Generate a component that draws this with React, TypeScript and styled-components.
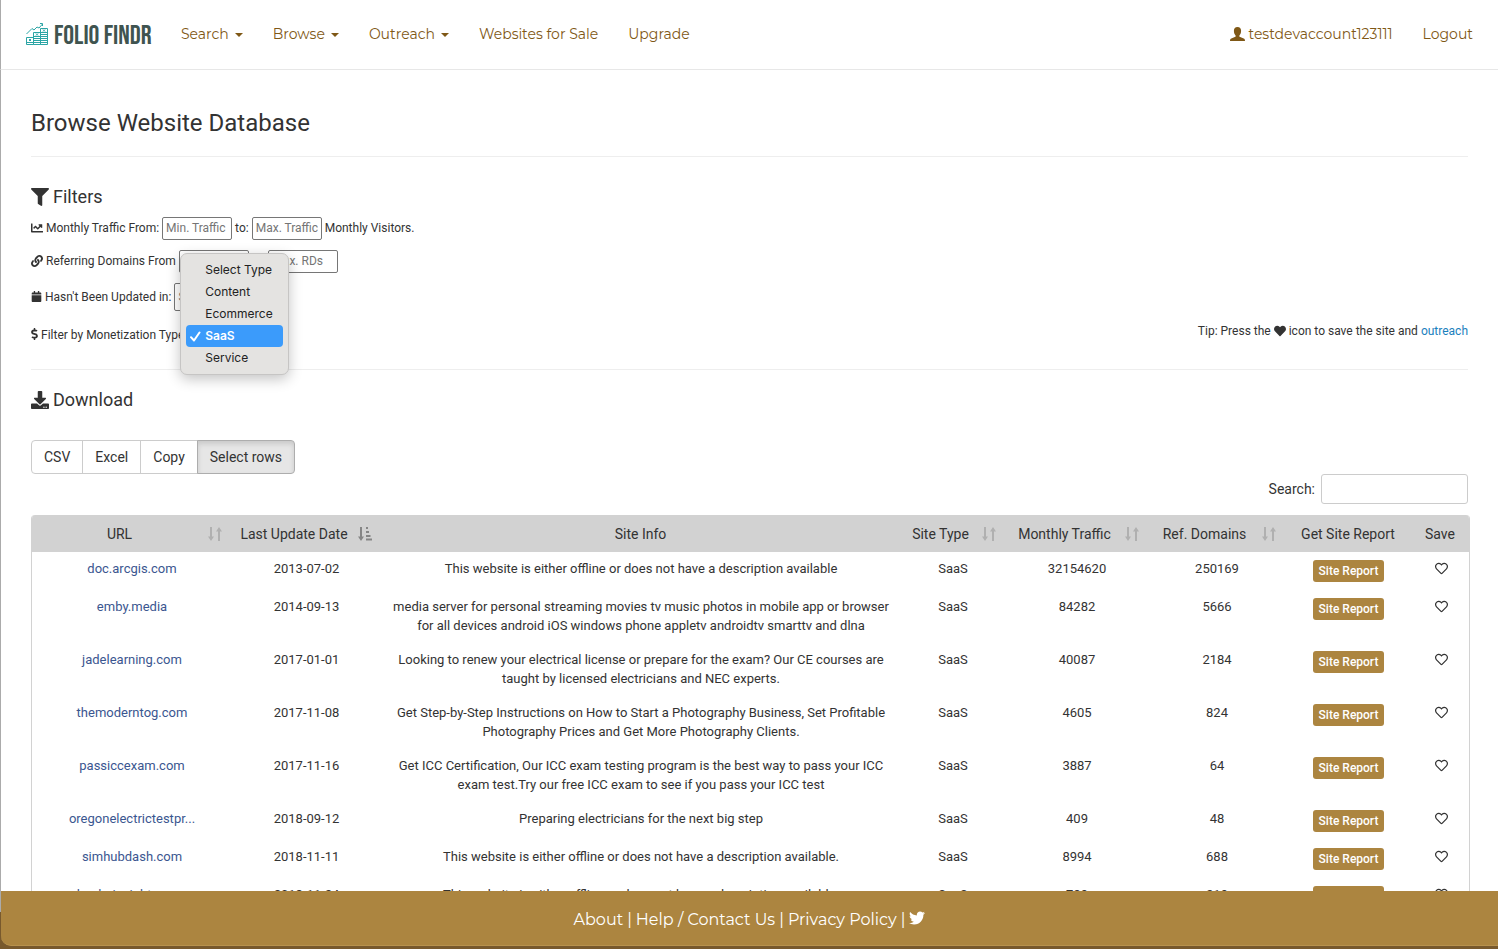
import React from "react";
import styled, { createGlobalStyle, css } from "styled-components";
import {
  FaCalendar,
  FaChartLine,
  FaDollarSign,
  FaDownload,
  FaFilter,
  FaHeart,
  FaLink,
  FaRegHeart,
  FaTwitter,
} from "react-icons/fa";

const GlobalStyle = createGlobalStyle`
  *, *::before, *::after { box-sizing: border-box; }
  body {
    margin: 0;
    background: #fff;
    color: #333;
    font: 14px/20px Roboto, sans-serif;
  }
  button, input, select { font-family: inherit; color: inherit; }
  a { text-decoration: none; }
`;

const brandFont = css`
  font-family: Montserrat, Inter, sans-serif;
  font-weight: 400;
`;

const Shell = styled.div`
  display: flex;
  flex-direction: column;
  height: 100vh;
  overflow: hidden;
`;

const Header = styled.header`
  ${brandFont}
  display: flex;
  align-items: center;
  flex: none;
  height: 70px;
  padding: 0 25px 2px;
  border-left: 1px solid #ababab;
  border-bottom: 1px solid #e7e7e7;
  font-size: 14px;
`;

const Brand = styled.a`
  display: flex;
  align-items: center;
  gap: 6px;
  width: 125px;
  margin-right: 30px;
  color: #3f5450;
  font: 27px/30px "Bebas Neue", "Roboto Condensed", "Liberation Sans Narrow", sans-serif;
  white-space: nowrap;
`;

const BrandName = styled.span`
  padding-top: 4px;
`;

const Nav = styled.nav`
  display: flex;
  align-items: center;
  gap: 30px;
`;

const Account = styled(Nav)`
  margin-left: auto;
`;

const navItem = css`
  display: flex;
  align-items: center;
  gap: 6px;
  padding: 0;
  border: 0;
  background: none;
  color: #7f5816;
  font: inherit;
  white-space: nowrap;
`;

const NavLink = styled.a`
  ${navItem}
  gap: 3px;
`;

const NavMenu = styled.button`
  ${navItem}
  &::after {
    content: "";
    margin-top: 2px;
    border: 4px solid transparent;
    border-top-color: currentColor;
    border-bottom: 0;
  }
`;

const NavIcon = styled.svg`
  flex: none;
`;

const Main = styled.main`
  flex: 1;
  min-height: 0;
  overflow: hidden;
  padding: 36px 28px 0 30px;
  border-left: 1px solid #ababab;
`;

const PageTitle = styled.h1`
  margin: 0 2px 0 0;
  padding-bottom: 15px;
  border-bottom: 1px solid #eee;
  font-size: 24px;
  font-weight: 400;
  line-height: 35px;
`;

const SectionTitle = styled.h2`
  display: flex;
  align-items: center;
  gap: 4px;
  margin: 0;
  font-size: 18px;
  font-weight: 400;
  line-height: 20px;
`;

const Filters = styled.section`
  display: flex;
  flex-direction: column;
  gap: 10px;
  margin-right: 2px;
  padding: 30px 0 20px;
  border-bottom: 1px solid #eee;
  font-size: 12px;
`;

const FilterRow = styled.div<{ $tall?: boolean }>`
  display: flex;
  align-items: center;
  gap: 3px;
  height: ${(p) => (p.$tall ? 28 : 23)}px;
  line-height: ${(p) => (p.$tall ? 20 : 21)}px;
  white-space: nowrap;
`;

const FilterLabel = styled.label`
  display: flex;
  align-items: center;
  gap: 3px;
  & > svg { margin-bottom: 2px; }
`;

const RangeInput = styled.input`
  width: 70px;
  height: 23px;
  padding: 0 3px 1px;
  border: 1px solid #767676;
  border-radius: 2px;
  background: #fff;
  font-size: 12px;
  &::placeholder { color: #757575; }
`;

const FilterSelect = styled.select`
  width: 90px;
  height: 28px;
  padding: 0 3px;
  border: 1px solid #767676;
  border-radius: 2px;
  appearance: none;
  background: #fff;
  color: #757575;
  font-size: 12px;
`;

const TypePicker = styled.div`
  position: relative;
`;

const Options = styled.ul`
  position: absolute;
  left: -10px;
  bottom: -26px;
  width: 109px;
  margin: 0;
  padding: 5px;
  border: 1px solid #c6c5c4;
  border-radius: 7px;
  background: #e4e3e1;
  box-shadow: 0 4px 14px rgba(0, 0, 0, 0.24);
  color: #222;
  font-family: Inter, Roboto, sans-serif;
  list-style: none;
`;

const Option = styled.li<{ $selected: boolean }>`
  display: flex;
  align-items: center;
  gap: 4px;
  height: 22px;
  padding-left: ${(p) => (p.$selected ? 4 : 19)}px;
  border-radius: 4px;
  background: ${(p) => (p.$selected ? "#3b9bfb" : "transparent")};
  color: ${(p) => (p.$selected ? "#fff" : "inherit")};
  font-weight: ${(p) => (p.$selected ? 600 : 400)};
`;

const Tip = styled.p`
  display: flex;
  align-items: center;
  gap: 3px;
  align-self: flex-start;
  margin: 0 0 0 auto;
`;

const TipLink = styled.a`
  color: #1b80bd;
`;

const Download = styled.section`
  padding-top: 20px;
`;

const ButtonGroup = styled.div`
  display: flex;
  margin-top: 30px;
`;

const ExportButton = styled.button<{ $active?: boolean }>`
  height: 34px;
  margin-left: -1px;
  padding: 0 12px;
  border: 1px solid ${(p) => (p.$active ? "#adadad" : "#ccc")};
  background: ${(p) => (p.$active ? "#e6e6e6" : "#fff")};
  box-shadow: ${(p) => (p.$active ? "inset 0 3px 5px rgba(0, 0, 0, 0.125)" : "none")};
  font-size: 14px;
  white-space: nowrap;
  &:first-child { margin-left: 0; border-radius: 4px 0 0 4px; }
  &:last-child { border-radius: 0 4px 4px 0; }
`;

const SearchBar = styled.label`
  display: flex;
  align-items: center;
  justify-content: flex-end;
  gap: 6px;
  margin: 0 2px 11px 0;
`;

const SearchInput = styled.input`
  width: 147px;
  height: 30px;
  border: 1px solid #ccc;
  border-radius: 3px;
  background: #fff;
`;

const Frame = styled.div`
  overflow: hidden;
  border: 1px solid #d2d2d2;
  border-top: 0;
  border-radius: 4px;
`;

const Table = styled.table`
  width: 100%;
  table-layout: fixed;
  border-collapse: collapse;
  text-align: center;
  font-size: 13px;
  line-height: 19px;
`;

const HeadCell = styled.th<{ $width?: number; $sortable?: boolean }>`
  width: ${(p) => (p.$width ? `${p.$width}px` : "auto")};
  height: 37px;
  padding: 1px ${(p) => (p.$sortable ? "9px 0 7px" : "0 0")};
  background: #d2d2d2;
  font-size: 14px;
  font-weight: 400;
  white-space: nowrap;
`;

const HeadContent = styled.div`
  display: flex;
  align-items: center;
`;

const HeadLabel = styled.span`
  flex: 1;
`;

const SortIcon = styled.svg<{ $active: boolean }>`
  flex: none;
  margin-left: 8px;
  color: ${(p) => (p.$active ? "#858585" : "#b0b0b0")};
`;

const Cell = styled.td`
  height: 38px;
  padding: 7px 7px 8px 8px;
  vertical-align: top;
`;

const SiteLink = styled.a`
  color: #3b5690;
`;

const ReportButton = styled.button`
  display: block;
  height: 22px;
  margin: 1px auto 0;
  padding: 0 6px;
  border: 0;
  border-radius: 3px;
  background: #ac8540;
  color: #fff;
  font-size: 12px;
  font-weight: 500;
  line-height: 22px;
  white-space: nowrap;
`;

const SaveButton = styled.button`
  display: inline-flex;
  padding: 3px 0 0 2px;
  border: 0;
  background: none;
`;

const FooterBackdrop = styled.div`
  flex: none;
  padding: 0 0 3px 1px;
  background: linear-gradient(#ababab 21px, #78592d 21px);
`;

const Footer = styled.footer`
  ${brandFont}
  display: flex;
  align-items: center;
  justify-content: center;
  gap: 4px;
  height: 55px;
  padding-top: 3px;
  border-bottom: 1px solid #b8924e;
  border-radius: 0 0 0 10px;
  background: #ac8540;
  color: #fff;
  font-size: 16px;
  white-space: nowrap;
`;

const FooterLink = styled.a`
  display: inline-flex;
  color: inherit;
`;

const TwitterLink = styled(FooterLink)`
  padding-bottom: 4px;
`;

const LogoMark = () => (
  <NavIcon width="22" height="22" viewBox="0 0 22 22" fill="none" stroke="#2ba5a5" aria-hidden="true">
    <path d="M.5 11 6 5.500l2 1.500 3-3 2 1 3.500-4M14 .5h2.500V3" />
    <path d="M.5 14.500h7v7h-7zM7.500 9.500h7v12h-7zM14.500 5.500h7v16h-7z" />
    <path d="M.5 19.500h21M7.500 17.500h14M7.500 15.500h14M7.500 13.500h14M14.500 9.500h7M14.500 11.500h7" />
    <path d="M3 16l2 2M5 16l-2 2M10 10.500l2 2M12 10.500l-2 2M17 6.500l2 2M19 6.500l-2 2" />
  </NavIcon>
);

const UserIcon = () => (
  <NavIcon width="15" height="14" viewBox="0 0 15 14" fill="currentColor" aria-hidden="true">
    <path d="M7.500 0C5.200 0 3.900 1.500 3.900 3.700c0 1.900.6 3.700 1.700 4.700.2.900-.1 1.400-.8 1.700L1.300 11.500C.5 11.900 0 12.500 0 14h15c0-1.500-.5-2.100-1.300-2.500l-3.500-1.400c-.7-.3-1-.8-.8-1.700 1.100-1 1.700-2.800 1.700-4.700C11.100 1.500 9.800 0 7.500 0z" />
  </NavIcon>
);

const CheckIcon = () => (
  <svg width="11" height="11" viewBox="0 0 11 11" fill="none" stroke="#fff" strokeWidth="2" strokeLinecap="round" strokeLinejoin="round" aria-hidden="true">
    <path d="M1 6.200 4 9.500 9.500 1.500" />
  </svg>
);

const DollarIcon = styled(FaDollarSign)`
  width: 7px;
  height: 12px;
`;

const SortGlyph = ({ active }: { active: boolean }) => (
  <SortIcon $active={active} width="14" height="14" viewBox="0 0 14 14" fill="currentColor" aria-hidden="true">
    <path d="M2 0h2v9.500h2L3 14 0 9.500h2z" />
    {active ? (
      <path d="M8 0h2v2H8zM8 4h3v2H8zM8 8h4.500v2H8zM8 11.500h6v2H8z" />
    ) : (
      <path d="M10 14h2V4.500h2L11 0 8 4.500h2z" />
    )}
  </SortIcon>
);

const types = ["Select Type", "Content", "Ecommerce", "SaaS", "Service"];

type Column = { label: string; width?: number; sort?: "idle" | "active" };

const columns: Column[] = [
  { label: "URL", width: 199, sort: "idle" },
  { label: "Last Update Date", width: 150, sort: "active" },
  { label: "Site Info" },
  { label: "Site Type", width: 105, sort: "idle" },
  { label: "Monthly Traffic", width: 143, sort: "idle" },
  { label: "Ref. Domains", width: 137, sort: "idle" },
  { label: "Get Site Report", width: 126 },
  { label: "Save", width: 58 },
];

const sites = [
  ["doc.arcgis.com", "2013-07-02", "This website is either offline or does not have a description available", "32154620", "250169"],
  ["emby.media", "2014-09-13", "media server for personal streaming movies tv music photos in mobile app or browser for all devices android iOS windows phone appletv androidtv smarttv and dlna", "84282", "5666"],
  ["jadelearning.com", "2017-01-01", "Looking to renew your electrical license or prepare for the exam? Our CE courses are taught by licensed electricians and NEC experts.", "40087", "2184"],
  ["themoderntog.com", "2017-11-08", "Get Step-by-Step Instructions on How to Start a Photography Business, Set Profitable Photography Prices and Get More Photography Clients.", "4605", "824"],
  ["passiccexam.com", "2017-11-16", "Get ICC Certification, Our ICC exam testing program is the best way to pass your ICC exam test.Try our free ICC exam to see if you pass your ICC test", "3887", "64"],
  ["oregonelectrictestpr...", "2018-09-12", "Preparing electricians for the next big step", "409", "48"],
  ["simhubdash.com", "2018-11-11", "This website is either offline or does not have a description available.", "8994", "688"],
  ["leaderinsights.com", "2018-11-24", "This website is either offline or does not have a description available.", "729", "219"],
];

export default function App() {
  return (
    <>
      <GlobalStyle />
      <Shell>
        <Header>
          <Brand href="#home">
            <LogoMark />
            <BrandName>FOLIO FINDR</BrandName>
          </Brand>
          <Nav aria-label="Main">
            <NavMenu type="button">Search</NavMenu>
            <NavMenu type="button">Browse</NavMenu>
            <NavMenu type="button">Outreach</NavMenu>
            <NavLink href="#sale">Websites for Sale</NavLink>
            <NavLink href="#upgrade">Upgrade</NavLink>
          </Nav>
          <Account aria-label="Account">
            <NavLink href="#account">
              <UserIcon />
              testdevaccount123111
            </NavLink>
            <NavLink href="#logout">Logout</NavLink>
          </Account>
        </Header>

        <Main>
          <PageTitle>Browse Website Database</PageTitle>

          <Filters>
            <SectionTitle>
              <FaFilter size={18} />
              Filters
            </SectionTitle>
            <FilterRow>
              <FilterLabel htmlFor="min-traffic">
                <FaChartLine size={12} />
                Monthly Traffic From:
              </FilterLabel>
              <RangeInput id="min-traffic" placeholder="Min. Traffic" />
              <label htmlFor="max-traffic">to:</label>
              <RangeInput id="max-traffic" placeholder="Max. Traffic" />
              <span>Monthly Visitors.</span>
            </FilterRow>
            <FilterRow>
              <FilterLabel htmlFor="min-rds">
                <FaLink size={12} />
                Referring Domains From
              </FilterLabel>
              <RangeInput id="min-rds" placeholder="Min. RDs" />
              <label htmlFor="max-rds">to:</label>
              <RangeInput id="max-rds" placeholder="Max. RDs" />
            </FilterRow>
            <FilterRow $tall>
              <FilterLabel htmlFor="updated">
                <FaCalendar size={11} />
                Hasn't Been Updated in:
              </FilterLabel>
              <FilterSelect id="updated">
                <option>Select Time</option>
              </FilterSelect>
            </FilterRow>
            <FilterRow $tall>
              <FilterLabel htmlFor="type">
                <DollarIcon />
                Filter by Monetization Type:
              </FilterLabel>
              <TypePicker>
                <FilterSelect id="type" defaultValue="SaaS">
                  {types.map((t) => (
                    <option key={t}>{t}</option>
                  ))}
                </FilterSelect>
                <Options role="listbox" aria-label="Monetization type">
                  {types.map((t) => (
                    <Option key={t} role="option" aria-selected={t === "SaaS"} $selected={t === "SaaS"}>
                      {t === "SaaS" && <CheckIcon />}
                      {t}
                    </Option>
                  ))}
                </Options>
              </TypePicker>
              <Tip>
                Tip: Press the <FaHeart size={12} /> icon to save the site and <TipLink href="#outreach">outreach</TipLink>
              </Tip>
            </FilterRow>
          </Filters>

          <Download>
            <SectionTitle>
              <FaDownload size={18} />
              Download
            </SectionTitle>
            <ButtonGroup>
              <ExportButton type="button">CSV</ExportButton>
              <ExportButton type="button">Excel</ExportButton>
              <ExportButton type="button">Copy</ExportButton>
              <ExportButton type="button" $active>
                Select rows
              </ExportButton>
            </ButtonGroup>
          </Download>

          <SearchBar>
            Search:
            <SearchInput type="search" />
          </SearchBar>

          <Frame>
            <Table>
              <thead>
                <tr>
                  {columns.map((c) => (
                    <HeadCell key={c.label} $width={c.width} $sortable={!!c.sort} scope="col">
                      <HeadContent>
                        <HeadLabel>{c.label}</HeadLabel>
                        {c.sort && <SortGlyph active={c.sort === "active"} />}
                      </HeadContent>
                    </HeadCell>
                  ))}
                </tr>
              </thead>
              <tbody>
                {sites.map(([url, date, info, traffic, domains]) => (
                  <tr key={url}>
                    <Cell>
                      <SiteLink href="#site">{url}</SiteLink>
                    </Cell>
                    <Cell>{date}</Cell>
                    <Cell>{info}</Cell>
                    <Cell>SaaS</Cell>
                    <Cell>{traffic}</Cell>
                    <Cell>{domains}</Cell>
                    <Cell>
                      <ReportButton type="button">Site Report</ReportButton>
                    </Cell>
                    <Cell>
                      <SaveButton type="button" aria-label={`Save ${url}`}>
                        <FaRegHeart size={13} />
                      </SaveButton>
                    </Cell>
                  </tr>
                ))}
              </tbody>
            </Table>
          </Frame>
        </Main>

        <FooterBackdrop>
          <Footer>
            <FooterLink href="#about">About</FooterLink>|<FooterLink href="#help">Help / Contact Us</FooterLink>|
            <FooterLink href="#privacy">Privacy Policy</FooterLink>|
            <TwitterLink href="#twitter" aria-label="Twitter">
              <FaTwitter size={16} />
            </TwitterLink>
          </Footer>
        </FooterBackdrop>
      </Shell>
    </>
  );
}
